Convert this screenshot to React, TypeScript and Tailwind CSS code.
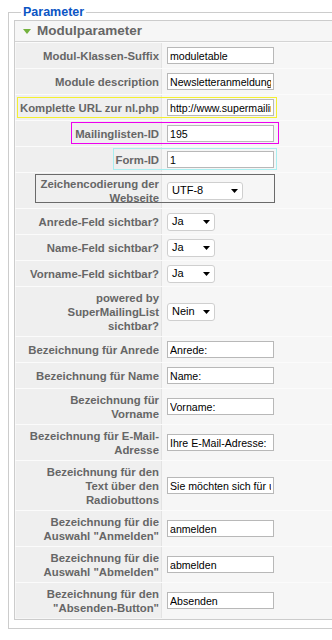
type Row = {
  label: string[];
  kind: "text" | "select";
  value: string;
  wide?: boolean;
};

const rows: Row[] = [
  { label: ["Modul-Klassen-Suffix"], kind: "text", value: "moduletable" },
  { label: ["Module description"], kind: "text", value: "Newsletteranmeldung" },
  { label: ["Komplette URL zur nl.php"], kind: "text", value: "http://www.supermailinglist.de/nl.php" },
  { label: ["Mailinglisten-ID"], kind: "text", value: "195" },
  { label: ["Form-ID"], kind: "text", value: "1" },
  { label: ["Zeichencodierung der", "Webseite"], kind: "select", value: "UTF-8", wide: true },
  { label: ["Anrede-Feld sichtbar?"], kind: "select", value: "Ja" },
  { label: ["Name-Feld sichtbar?"], kind: "select", value: "Ja" },
  { label: ["Vorname-Feld sichtbar?"], kind: "select", value: "Ja" },
  { label: ["powered by", "SuperMailingList", "sichtbar?"], kind: "select", value: "Nein" },
  { label: ["Bezeichnung für Anrede"], kind: "text", value: "Anrede:" },
  { label: ["Bezeichnung für Name"], kind: "text", value: "Name:" },
  { label: ["Bezeichnung für", "Vorname"], kind: "text", value: "Vorname:" },
  { label: ["Bezeichnung für E-Mail-", "Adresse"], kind: "text", value: "Ihre E-Mail-Adresse:" },
  {
    label: ["Bezeichnung für den", "Text über den", "Radiobuttons"],
    kind: "text",
    value: "Sie möchten sich für unseren Newsletter",
  },
  { label: ["Bezeichnung für die", 'Auswahl "Anmelden"'], kind: "text", value: "anmelden" },
  { label: ["Bezeichnung für die", 'Auswahl "Abmelden"'], kind: "text", value: "abmelden" },
  { label: ["Bezeichnung für den", '"Absenden-Button"'], kind: "text", value: "Absenden" },
];

function SelectBox({ value, wide }: { value: string; wide?: boolean }) {
  return (
    <div
      className={`flex h-[18px] items-center justify-between rounded-[3px] border border-[#cfcfcf] bg-white pl-[4px] pr-[4px] text-[11px] text-black ${
        wide ? "w-[76px]" : "w-[48px]"
      }`}
    >
      <span>{value}</span>
      <svg width="7" height="4" viewBox="0 0 7 4">
        <polygon points="0,0 7,0 3.5,4" fill="#000" />
      </svg>
    </div>
  );
}

function ParamRow({ row }: { row: Row }) {
  return (
    <div className="flex border-t border-[#fbfbfb]">
      <div className="ml-px flex min-h-[25px] w-[146px] shrink-0 flex-col justify-center border-r border-[#e3e3e3] bg-[#efefef] py-[3.5px] pr-[2px] text-right text-[11.35px] font-bold leading-[14px] whitespace-nowrap text-[#666666]">
        {row.label.map((line) => (
          <span key={line}>{line}</span>
        ))}
      </div>
      <div className="flex items-center pl-[5px]">
        {row.kind === "text" ? (
          <input
            readOnly
            value={row.value}
            className="h-[17px] w-[107px] border border-[#b8b8b8] bg-white px-[2px] py-0 text-[10.6px] text-black outline-none"
          />
        ) : (
          <SelectBox value={row.value} wide={row.wide} />
        )}
      </div>
    </div>
  );
}

export default function App() {
  return (
    <div className="relative h-[640px] w-[332px] overflow-hidden bg-white pt-[5px] font-['Liberation_Sans',Arial,sans-serif]">
      <fieldset className="ml-[8px] w-[360px] border border-[#cccccc] px-[5px] pt-px pb-[8px]">
        <legend className="ml-[7px] px-[2px] text-[12.5px] font-bold leading-[14px] text-[#0b55c4]">
          Parameter
        </legend>
        <div className="border border-[#cccccc] bg-[#f6f6f6] pb-px">
          <div className="flex h-[21px] items-center border-b border-[#d4d4d4] pl-[8px]">
            <svg width="8" height="5" viewBox="0 0 8 5" className="mt-px">
              <polygon points="0,0 8,0 4,5" fill="#74b23e" />
            </svg>
            <span className="ml-[6px] text-[13.5px] font-bold text-[#666666]">Modulparameter</span>
          </div>
          {rows.map((row) => (
            <ParamRow key={row.label.join(" ")} row={row} />
          ))}
        </div>
      </fieldset>

      {/* annotation frames drawn over the form */}
      <div className="pointer-events-none absolute left-[17px] top-[97px] h-[21px] w-[260px] border border-[#f4f030]" />
      <div className="pointer-events-none absolute left-[71px] top-[122px] h-[22px] w-[208px] border border-[#ee00ee]" />
      <div className="pointer-events-none absolute left-[113px] top-[148px] h-[22px] w-[164px] border border-[#a8eef0]" />
      <div className="pointer-events-none absolute left-[35px] top-[174px] h-[29px] w-[240px] border border-[#6a6a6a]" />
    </div>
  );
}
